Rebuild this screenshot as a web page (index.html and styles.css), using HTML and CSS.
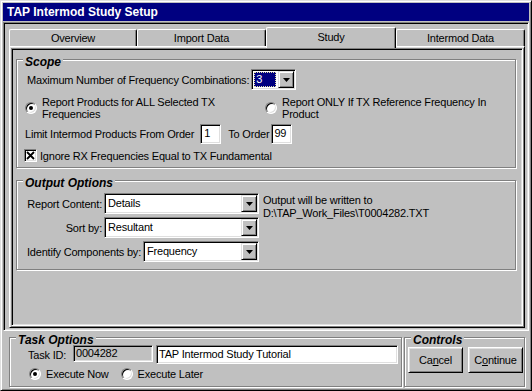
FILE: index.html
```html
<!DOCTYPE html>
<html>
<head>
<meta charset="utf-8">
<title>TAP Intermod Study Setup</title>
<link rel="stylesheet" href="styles.css">
</head>
<body>
<div class="window">
  <div class="titlebar">TAP Intermod Study Setup</div>
  <div class="main-frame">
    <div class="tabs">
      <div class="tab t1">Overview</div>
      <div class="tab t2">Import Data</div>
      <div class="tab t3 active">Study</div>
      <div class="tab t4">Intermod Data</div>
    </div>
    <div class="panel">
      <div class="panel-inner">
        <div class="group scope">
          <div class="group-label">Scope</div>
          <div class="row max-row">
            <span class="max-text">Maximum Number of Frequency Combinations:</span>
            <div class="combo combo-small">
              <div class="combo-field"><span class="sel">3</span></div>
              <div class="combo-btn"><svg width="7" height="4" viewBox="0 0 7 4"><polygon points="0,0 7,0 3.5,4" fill="#000"/></svg></div>
            </div>
          </div>
          <div class="row radio-row">
            <div class="opt opt-all"><span class="radio checked"></span><span class="opt-text">Report Products for ALL Selected TX Frequencies</span></div>
            <div class="opt opt-only"><span class="radio"></span><span class="opt-text">Report ONLY If TX Reference Frequency In Product</span></div>
          </div>
          <div class="row order-row">
            <span>Limit Intermod Products From Order</span>
            <div class="textbox tb-from">1</div>
            <span class="to-order">To Order</span>
            <div class="textbox tb-to">99</div>
          </div>
          <div class="row check-row">
            <span class="checkbox"><svg width="9" height="9" viewBox="0 0 9 9"><path d="M1 1 L8 8 M8 1 L1 8" stroke="#000" stroke-width="1.8"/></svg></span>
            <span class="check-text">Ignore RX Frequencies Equal to TX Fundamental</span>
          </div>
        </div>
        <div class="group output">
          <div class="group-label">Output Options</div>
          <div class="output-body">
            <div class="output-fields">
              <div class="field-row">
                <span>Report Content:</span>
                <div class="combo combo-wide">
                  <div class="combo-field">Details</div>
                  <div class="combo-btn"><svg width="7" height="4" viewBox="0 0 7 4"><polygon points="0,0 7,0 3.5,4" fill="#000"/></svg></div>
                </div>
              </div>
              <div class="field-row">
                <span>Sort by:</span>
                <div class="combo combo-wide">
                  <div class="combo-field">Resultant</div>
                  <div class="combo-btn"><svg width="7" height="4" viewBox="0 0 7 4"><polygon points="0,0 7,0 3.5,4" fill="#000"/></svg></div>
                </div>
              </div>
              <div class="field-row">
                <span>Identify Components by:</span>
                <div class="combo combo-mid">
                  <div class="combo-field">Frequency</div>
                  <div class="combo-btn"><svg width="7" height="4" viewBox="0 0 7 4"><polygon points="0,0 7,0 3.5,4" fill="#000"/></svg></div>
                </div>
              </div>
            </div>
            <div class="output-note">Output will be written to<br>D:\TAP_Work_Files\T0004282.TXT</div>
          </div>
        </div>
      </div>
    </div>
  </div>
  <div class="bottom">
    <div class="group task">
      <div class="group-label">Task Options</div>
      <div class="task-row">
        <span class="task-label">Task ID:</span>
        <div class="textbox tb-id">0004282</div>
        <div class="textbox tb-name">TAP Intermod Study Tutorial</div>
      </div>
      <div class="exec-row">
        <div class="opt"><span class="radio checked"></span><span>Execute Now</span></div>
        <div class="opt exec-later"><span class="radio"></span><span>Execute Later</span></div>
      </div>
    </div>
    <div class="group controls">
      <div class="group-label">Controls</div>
      <div class="btn-row">
        <div class="btn">Ca<u>n</u>cel</div>
        <div class="btn">C<u>o</u>ntinue</div>
      </div>
    </div>
  </div>
</div>
</body>
</html>
```
FILE: styles.css
```css
* { box-sizing: border-box; }
html, body { margin: 0; padding: 0; }
body {
  width: 532px;
  height: 391px;
  overflow: hidden;
  background: #c0c0c0;
  font-family: "Liberation Sans", Arial, sans-serif;
  font-size: 11px;
  letter-spacing: -0.2px;
  color: #000;
}
.window {
  width: 532px;
  height: 391px;
  background: #c0c0c0;
  border: 1px solid;
  border-color: #dfdfdf #000 #000 #dfdfdf;
  box-shadow: inset 1px 1px #fff, inset -1px -1px #808080;
  padding: 2px;
  display: flex;
  flex-direction: column;
}
.titlebar {
  flex: none;
  height: 18px;
  background: #000080;
  color: #fff;
  font-weight: bold;
  font-size: 12px;
  letter-spacing: 0;
  line-height: 18px;
  padding-left: 4px;
}
.main-frame {
  flex: none;
  margin-top: 1px;
  height: 309px;
  border: 1px solid;
  border-color: #808080 #fff #fff #808080;
  box-shadow: inset 1px 1px #000, inset -1px -1px #dfdfdf;
  padding: 4px 3px 2px 5px;
}
.tabs {
  display: flex;
  align-items: flex-start;
  height: 19px;
}
.tab {
  height: 17px;
  margin-top: 2px;
  border-top: 1px solid #fff;
  border-left: 1px solid #fff;
  border-right: 1px solid #000;
  border-radius: 2px 2px 0 0;
  box-shadow: inset -1px 0 #808080;
  text-align: center;
  line-height: 16px;
  background: #c0c0c0;
}
.t1 { width: 128px; }
.t2 { width: 129px; }
.t3 { width: 130px; }
.t4 { width: 129px; }
.tab.active {
  position: relative;
  z-index: 1;
  height: 21px;
  margin-top: 0;
  line-height: 19px;
}
.panel {
  height: 282px;
  border: 1px solid;
  border-color: #fff #000 #000 #fff;
  box-shadow: inset 1px 1px #dfdfdf, inset -1px -1px #808080;
  padding: 1px;
}
.panel-inner {
  height: 100%;
  border: 1px solid;
  border-color: #808080 #fff #fff #808080;
  box-shadow: inset 1px 1px #000, inset -1px -1px #dfdfdf;
  padding: 10px 6px 0 4px;
}
.group {
  border: 1px solid #808080;
  box-shadow: inset 1px 1px #fff, 1px 1px #fff;
  padding-left: 8px;
}
.group-label {
  width: fit-content;
  margin: -5px 0 0 -2px;
  padding: 0 2px;
  background: #c0c0c0;
  font-weight: bold;
  font-style: italic;
  font-size: 12px;
  line-height: 14px;
  letter-spacing: 0;
}
.scope { height: 109px; }
.output { height: 90px; margin-top: 12px; }
.row { display: flex; align-items: center; }
.max-row { height: 21px; }
.max-text { margin-left: 2px; }
.combo {
  display: flex;
  height: 21px;
  border: 1px solid;
  border-color: #808080 #fff #fff #808080;
  box-shadow: inset 1px 1px #000, inset -1px -1px #dfdfdf;
  background: #fff;
  padding: 1px;
}
.combo-small { width: 45px; margin-left: 2px; }
.combo-wide { width: 155px; }
.combo-mid { width: 116px; }
.combo-field {
  flex: 1;
  line-height: 17px;
  padding-left: 2px;
  white-space: nowrap;
  overflow: hidden;
}
.combo-small .combo-field { padding: 1px 2px 1px 1px; display: flex; }
.sel {
  flex: 1;
  background: #000080;
  color: #fff;
  border: 1px dotted #e0e0a0;
  line-height: 13px;
  padding-left: 1px;
}
.combo-btn {
  width: 16px;
  height: 17px;
  background: #c0c0c0;
  border: 1px solid;
  border-color: #dfdfdf #000 #000 #dfdfdf;
  box-shadow: inset 1px 1px #fff, inset -1px -1px #808080;
  display: flex;
  align-items: center;
  justify-content: center;
}
.combo-btn svg { display: block; }
.radio-row { margin-top: 6px; align-items: center; }
.opt { display: flex; align-items: center; }
.opt-all { width: 240px; }
.opt-all .opt-text { width: 210px; margin-left: 5px; }
.opt-only .opt-text { width: 220px; margin-left: 5px; }
.opt-text { line-height: 12px; }
.radio {
  flex: none;
  width: 12px;
  height: 12px;
  border-radius: 50%;
  border: 1px solid;
  border-color: #808080 #fff #fff #808080;
  box-shadow: inset 1px 1px #000, inset -1px -1px #dfdfdf;
  background: #fff;
  display: flex;
  align-items: center;
  justify-content: center;
}
.radio.checked::after {
  content: "";
  width: 4px;
  height: 4px;
  border-radius: 50%;
  background: #000;
}
.order-row { margin-top: 4px; height: 20px; }
.textbox {
  height: 20px;
  border: 1px solid;
  border-color: #808080 #fff #fff #808080;
  box-shadow: inset 1px 1px #000, inset -1px -1px #dfdfdf;
  background: #fff;
  padding-left: 3px;
  line-height: 17px;
  white-space: nowrap;
}
.tb-from { width: 21px; margin-left: 6px; }
.to-order { margin-left: 7px; }
.tb-to { width: 21px; margin-left: 2px; padding-left: 2px; }
.check-row { margin-top: 5px; height: 13px; }
.checkbox {
  width: 13px;
  height: 13px;
  margin-left: -1px;
  border: 1px solid;
  border-color: #808080 #fff #fff #808080;
  box-shadow: inset 1px 1px #000, inset -1px -1px #dfdfdf;
  background: #fff;
  display: flex;
  align-items: center;
  justify-content: center;
}
.checkbox svg { display: block; }
.check-text { margin-left: 3px; }
.output-body { display: flex; margin-top: 3px; }
.output-fields {
  width: 234px;
  display: flex;
  flex-direction: column;
  align-items: flex-end;
  gap: 3px;
}
.field-row { display: flex; align-items: center; gap: 2px; }
.output-note { margin-left: 4px; margin-top: 1px; line-height: 13px; }
.bottom {
  display: flex;
  gap: 2px;
  padding: 6px 0 0 6px;
}
.task { width: 393px; height: 50px; }
.controls { width: 121px; height: 50px; padding-left: 3px; }
.controls .group-label { margin-left: 3px; }
.task-row { display: flex; align-items: flex-start; margin-top: -2px; margin-left: 10px; }
.task-label { width: 45px; margin-top: 4px; }
.tb-id { width: 80px; height: 17px; background: #c0c0c0; line-height: 14px; padding-left: 2px; }
.tb-name { width: 242px; height: 19px; margin-left: 3px; line-height: 16px; padding-left: 2px; }
.exec-row { display: flex; margin-top: 3px; margin-left: 11px; height: 14px; align-items: center; }
.exec-row .opt span + span { margin-left: 5px; }
.exec-later { margin-left: 12px; }
.btn-row { display: flex; gap: 5px; }
.btn {
  width: 55px;
  height: 26px;
  border: 1px solid;
  border-color: #fff #000 #000 #fff;
  box-shadow: inset 1px 1px #dfdfdf, inset -1px -1px #808080;
  background: #c0c0c0;
  display: flex;
  align-items: center;
  justify-content: center;
}
```
